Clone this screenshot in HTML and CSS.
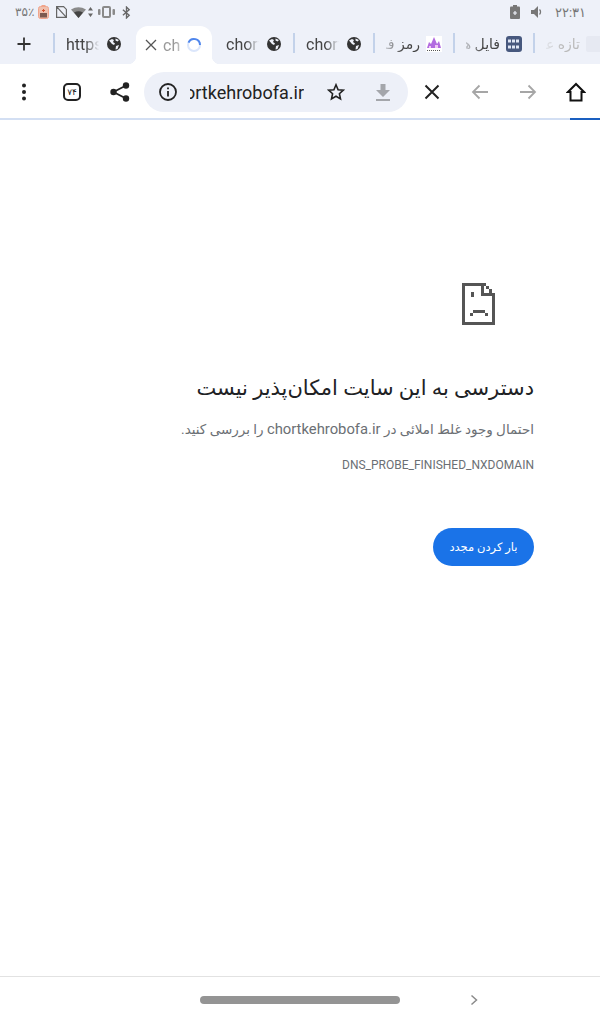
FILE: index.html
```html
<!DOCTYPE html>
<html lang="fa">
<head>
    <meta charset="UTF-8">
    <meta name="viewport" content="width=device-width, initial-scale=1.0">
    <title>chortkehrobofa.ir</title>
    <link rel="stylesheet" href="styles.css">
</head>
<body>
    <!-- Status bar -->
    <div class="status-bar">
        <div class="status-group status-left">
            <span class="status-text">۳۵٪</span>
            <svg width="11" height="14" viewBox="0 0 11 14"><rect x="0.5" y="1.500" width="10" height="12" rx="2" fill="#efc0ae" stroke="#f0a58c"/><rect x="3.500" y="0" width="4" height="2" fill="#f0a58c"/><rect x="2" y="8" width="7" height="4.500" fill="#7d5a50"/><path d="M5.500 4v3M4 5.500h3" stroke="#d2502e"/></svg>
            <svg class="sim-icon" width="11" height="12" viewBox="0 0 11 12" fill="none" stroke="#666" stroke-width="1.200"><path d="M.6.600h7l2.800 2.800v8H.6zM.6.600l9.800 10.800"/></svg>
            <svg width="15" height="11" viewBox="0 0 15 11"><path d="M0 2.500Q7.500-2 15 2.500L7.500 11z" fill="#8a8a8a"/><path d="M3 5.500Q7.500 3 12 5.500L7.500 11z" fill="#444"/></svg>
            <svg class="wifi-arrows" width="5" height="10" viewBox="0 0 5 10" fill="#666"><path d="M2.500 0L5 3.500H0zM2.500 10L0 6.500h5z"/></svg>
            <svg class="vibrate-icon" width="17" height="12" viewBox="0 0 17 12" fill="#8a8a8a"><rect x="4" y="0" width="9" height="12" rx="2"/><rect x="6" y="2" width="5" height="8" fill="#eef1f9"/><rect x="0" y="3" width="2.500" height="6" rx="1"/><rect x="14.500" y="3" width="2.500" height="6" rx="1"/></svg>
            <svg class="bt-icon" width="9" height="13" viewBox="0 0 10 13" fill="none" stroke="#666" stroke-width="1.500"><path d="M1 3.500l7 6-3 3V.5l3 3-7 6"/></svg>
        </div>
        <div class="status-group status-right">
            <svg width="10" height="14" viewBox="0 0 10 14"><rect x="0" y="1.500" width="10" height="12.500" rx="1" fill="#777"/><rect x="3" y="0" width="4" height="2" fill="#777"/><path d="M5 6v4M3 8h4" stroke="#eef1f9" stroke-width="1.200"/></svg>
            <svg width="12" height="12" viewBox="0 0 12 12" fill="none"><path d="M0 4h3l4-4v12L3 8H0z" fill="#777"/><path d="M8.500 3.500a3.500 3.500 0 0 1 0 5" stroke="#777" stroke-width="1.300"/></svg>
            <span class="status-text clock">۲۲:۳۱</span>
        </div>
    </div>

    <!-- Tab strip -->
    <div class="tab-strip">
        <div class="new-tab">
            <svg width="16" height="16" viewBox="0 0 16 16" stroke="#333" stroke-width="1.800"><path d="M8 1.500v13M1.500 8h13"/></svg>
        </div>
        <div class="tab">
            <span class="tab-title">https</span>
            <svg class="globe" viewBox="0 0 14 14"><use href="#globe"/></svg>
        </div>
        <div class="tab tab-active">
            <svg class="tab-close" width="12" height="12" viewBox="0 0 12 12" stroke="#555" stroke-width="1.300"><path d="M1 1l10 10M11 1L1 11"/></svg>
            <span class="tab-title tab-title-short">ch</span>
            <svg class="spinner" width="16" height="16" viewBox="0 0 16 16" fill="none" stroke-width="2"><circle cx="8" cy="8" r="6" stroke="#dbe6fb"/><path d="M2.500 5.600A6 6 0 0 1 14 8" stroke="#4f86ec"/></svg>
        </div>
        <div class="tab">
            <span class="tab-title">chort</span>
            <svg class="globe" viewBox="0 0 14 14"><use href="#globe"/></svg>
        </div>
        <div class="tab">
            <span class="tab-title">chort</span>
            <svg class="globe" viewBox="0 0 14 14"><use href="#globe"/></svg>
        </div>
        <div class="tab tab-rtl">
            <svg class="favicon" width="16" height="16" viewBox="0 0 16 16"><rect width="16" height="16" fill="#fff"/><path d="M1 12l2-6 2 2 3-7 3 7 2-3 2 7z" fill="#b26be0"/><path d="M3 10h2v2H3zM9 9h3v3H9z" fill="#f0c8f5"/><path d="M1 14.500h14" stroke="#555" stroke-dasharray="1 1"/></svg>
            <span class="tab-title" dir="rtl">رمز فراموش</span>
        </div>
        <div class="tab tab-rtl">
            <svg class="favicon" width="16" height="16" viewBox="0 0 16 16"><rect width="16" height="16" rx="3" fill="#47587e"/><path d="M2 5h12M2 11h12" stroke="#dfe6f5" stroke-width="3" stroke-dasharray="3 1"/></svg>
            <span class="tab-title" dir="rtl">فایل های</span>
        </div>
        <div class="tab tab-rtl tab-faded">
            <svg class="favicon" width="16" height="16" viewBox="0 0 16 16"><rect width="16" height="16" rx="2" fill="#e6e9f2"/></svg>
            <span class="tab-title" dir="rtl">تازه عکس</span>
        </div>
    </div>

    <!-- Toolbar -->
    <div class="toolbar">
        <div class="tool-btn">
            <svg width="6" height="18" viewBox="0 0 6 18" fill="#222"><circle cx="3" cy="2.500" r="2"/><circle cx="3" cy="9" r="2"/><circle cx="3" cy="15.500" r="2"/></svg>
        </div>
        <div class="tool-btn">
            <div class="tab-count">۷۴</div>
        </div>
        <div class="tool-btn">
            <svg width="20" height="20" viewBox="0 0 20 20" fill="#222"><circle cx="16" cy="3.500" r="3.200"/><circle cx="3.500" cy="10" r="3.200"/><circle cx="16" cy="16.500" r="3.200"/><path d="M16 3.500L3.500 10 16 16.500" fill="none" stroke="#222" stroke-width="1.800"/></svg>
        </div>
        <div class="omnibox">
            <svg class="info-icon" width="20" height="20" viewBox="0 0 20 20" fill="none" stroke="#222" stroke-width="1.800"><circle cx="10" cy="10" r="8"/><path d="M10 9v5.500M10 5.500v1.800"/></svg>
            <span class="url"><span class="url-inner">chortkehrobofa.ir</span></span>
            <svg class="star-icon" width="18" height="18" viewBox="0 0 18 18" fill="none" stroke="#222" stroke-width="1.600"><path d="M9 1.800l2.100 4.900 5.200.5-3.900 3.500 1.100 5.200L9 13.200l-4.500 2.700 1.100-5.200-3.900-3.500 5.200-.5z"/></svg>
            <svg class="download-icon" width="14" height="17" viewBox="0 0 14 17" fill="#a4a6ab"><path d="M4.500 0h5v6H14l-7 7-7-7h4.500z"/><rect x="0" y="15" width="14" height="2"/></svg>
        </div>
        <div class="tool-btn">
            <svg width="16" height="16" viewBox="0 0 16 16" stroke="#222" stroke-width="2"><path d="M1.500 1.500l13 13M14.500 1.500l-13 13"/></svg>
        </div>
        <div class="tool-btn">
            <svg width="18" height="16" viewBox="0 0 18 16" fill="none" stroke="#a6a6a6" stroke-width="1.800"><path d="M17 8H2M8.500 1.500L2 8l6.500 6.500"/></svg>
        </div>
        <div class="tool-btn">
            <svg width="18" height="16" viewBox="0 0 18 16" fill="none" stroke="#a6a6a6" stroke-width="1.800"><path d="M1 8h15M9.500 1.500L16 8l-6.500 6.500"/></svg>
        </div>
        <div class="tool-btn">
            <svg width="20" height="20" viewBox="0 0 20 20" fill="none" stroke="#111" stroke-width="2"><path d="M10 2L2 10h2.500v8.500h11V10H18z"/></svg>
        </div>
    </div>

    <!-- Progress -->
    <div class="progress"><div class="progress-fill"></div></div>

    <!-- Error page -->
    <div class="page">
        <svg class="error-icon" width="33" height="42" viewBox="0 0 33 42" fill="#555" shape-rendering="crispEdges">
            <path d="M0 0h24v3H3v36h27V13h3v29H0z"/>
            <path d="M19 3h3v7h11v3H19z"/>
            <path d="M24 3h3v3h-3zM27 6h3v4h-3z"/>
            <rect x="9" y="9" width="3" height="5"/>
            <path d="M11 27h12v3h3v3h-3v-3H11v3H8v-3h3z"/>
        </svg>
        <h1 class="error-title">دسترسی به این سایت امکان‌پذیر نیست</h1>
        <p class="error-desc">احتمال وجود غلط املائی در <span class="domain">chortkehrobofa.ir</span> را بررسی کنید.</p>
        <p class="error-code">DNS_PROBE_FINISHED_NXDOMAIN</p>
        <button class="reload-btn">بار کردن مجدد</button>
    </div>

    <!-- Bottom scroll bar -->
    <div class="bottom-bar">
        <div class="scroll-thumb"></div>
        <svg class="chevron" width="8" height="12" viewBox="0 0 8 12" fill="none" stroke="#8a8a8a" stroke-width="1.500"><path d="M1.500 1.500L6.500 6l-5 4.500"/></svg>
    </div>

    <svg class="defs" width="0" height="0">
        <defs>
            <g id="globe">
                <circle cx="7" cy="7" r="7" fill="#333"/>
                <path d="M2 3.500l3-1.500 2 1-1 2 2 1.500-1 1.500-2-1zM9 9l3-1-1.500 4-2 .5zM8.500 1.500l3.500 1.500-1.500 1.500-2-1z" fill="#eef1f9"/>
            </g>
        </defs>
    </svg>
</body>
</html>
```

FILE: styles.css
```css
:root {
    --strip-color: #eef1f9;
    --pill-color: #edf0f8;
    --sep-color: #c3d2ea;
    --accent-color: #1a73e8;
}

* {
    box-sizing: border-box;
}

body {
    margin: 0;
    height: 1024px;
    display: flex;
    flex-direction: column;
    background-color: #fff;
    font-family: Roboto, "Noto Sans", "DejaVu Sans", sans-serif;
    overflow: hidden;
}

/* Status bar */
.status-bar {
    height: 24px;
    display: flex;
    justify-content: space-between;
    align-items: center;
    padding: 0 14px 0 15px;
    background-color: var(--strip-color);
}

.status-group {
    display: flex;
    align-items: center;
}

.status-left {
    gap: 4px;
}

.status-right {
    gap: 11px;
}

.status-text {
    font-size: 12px;
    color: #777;
}

.clock {
    font-size: 13px;
    margin-left: 1px;
}

.sim-icon {
    margin-left: 3px;
}

.wifi-arrows {
    margin-left: -2px;
}

.vibrate-icon {
    margin-left: 1px;
}

.bt-icon {
    margin-left: 3px;
}

/* Tabs */
.tab-strip {
    height: 40px;
    display: flex;
    align-items: stretch;
    background-color: var(--strip-color);
    overflow: hidden;
}

.new-tab {
    width: 54px;
    flex: none;
    display: flex;
    justify-content: center;
    align-items: center;
    padding-right: 6px;
}

.tab {
    width: 80px;
    flex: none;
    position: relative;
    display: flex;
    align-items: center;
    justify-content: space-between;
    padding: 0 13px 0 12px;
}

.tab::before {
    content: "";
    position: absolute;
    left: -1px;
    top: 9px;
    height: 20px;
    width: 2px;
    background-color: var(--sep-color);
}

.tab-active {
    width: 76px;
    margin: 2px 2px 0;
    padding: 0 10px 0 9px;
    background-color: #fff;
    border-radius: 12px 12px 0 0;
    justify-content: flex-start;
}

.tab-active + .tab::before {
    display: none;
}

/* the curved feet of the active tab */
.tab-active::before,
.tab-active::after {
    content: "";
    position: absolute;
    top: auto;
    bottom: 0;
    width: 8px;
    height: 8px;
}

.tab-active::before {
    left: -8px;
    background: radial-gradient(circle at 0 0, transparent 8px, #fff 8.500px);
}

.tab-active::after {
    right: -8px;
    background: radial-gradient(circle at 100% 0, transparent 8px, #fff 8.500px);
}

.tab-title {
    flex: 1;
    font-size: 16px;
    color: #444;
    white-space: nowrap;
    overflow: hidden;
    -webkit-mask-image: linear-gradient(to right, #000 55%, transparent 95%);
    mask-image: linear-gradient(to right, #000 55%, transparent 95%);
}

.tab-title-short {
    margin-left: 6px;
    color: #999;
}

.tab-rtl {
    padding-right: 12px;
}

.tab-rtl .tab-title {
    font-size: 14px;
    text-align: right;
    -webkit-mask-image: linear-gradient(to left, #000 50%, rgba(0, 0, 0, 0.25) 100%);
    mask-image: linear-gradient(to left, #000 50%, rgba(0, 0, 0, 0.25) 100%);
}

.tab-faded .tab-title {
    color: #bbb;
}

.globe {
    width: 14px;
    height: 14px;
    flex: none;
    margin-left: 6px;
}

.spinner {
    flex: none;
}

.tab-close {
    flex: none;
}

.favicon {
    flex: none;
    order: 2;
    margin-left: 6px;
}

.defs {
    position: absolute;
}

/* Toolbar */
.toolbar {
    height: 54px;
    padding-top: 2px;
    display: flex;
    align-items: center;
    background-color: #fff;
}

.tool-btn {
    width: 48px;
    height: 48px;
    flex: none;
    display: flex;
    justify-content: center;
    align-items: center;
}

.tab-count {
    width: 18px;
    height: 18px;
    border: 2px solid #222;
    border-radius: 5px;
    font-size: 9px;
    line-height: 14px;
    text-align: center;
    color: #222;
}

.omnibox {
    width: 264px;
    height: 40px;
    flex: none;
    display: flex;
    align-items: center;
    background-color: var(--pill-color);
    border-radius: 20px;
    padding-left: 14px;
}

.info-icon {
    flex: none;
}

.url {
    width: 114px;
    flex: none;
    margin-left: 12px;
    font-size: 18px;
    color: #222;
    overflow: hidden;
    white-space: nowrap;
    direction: rtl;
}

.url-inner {
    direction: ltr;
    unicode-bidi: embed;
}

.star-icon {
    flex: none;
    margin-left: 23px;
}

.download-icon {
    flex: none;
    margin-left: 31px;
}

.progress {
    height: 2px;
    display: flex;
    justify-content: flex-end;
    background-color: #d3dff3;
}

.progress-fill {
    width: 30px;
    background-color: #1a5fc0;
}

/* Error page */
.page {
    flex: 1;
    display: flex;
    flex-direction: column;
    align-items: flex-end;
    padding: 163px 66px 0 0;
    direction: ltr;
}

.error-icon {
    margin-right: 39px;
}

.error-title {
    direction: rtl;
    margin: 46px 0 0;
    font-size: 21px;
    line-height: 34px;
    font-weight: 400;
    color: #202124;
}

.error-desc {
    direction: rtl;
    margin: 13px 0 0;
    font-size: 13.500px;
    line-height: 22px;
    color: #6b6f74;
}

.domain {
    font-size: 14.800px;
}

.error-code {
    margin: 18px 0 0;
    font-size: 12px;
    line-height: 14px;
    color: #6b6f74;
}

.reload-btn {
    width: 101px;
    height: 38px;
    margin-top: 56px;
    border: none;
    border-radius: 19px;
    background-color: var(--accent-color);
    color: #fff;
    font-family: inherit;
    font-size: 11.500px;
    direction: rtl;
}

/* Bottom bar */
.bottom-bar {
    height: 48px;
    position: relative;
    display: flex;
    justify-content: center;
    align-items: center;
    border-top: 1px solid #e2e2e2;
    padding-bottom: 1px;
}

.scroll-thumb {
    width: 200px;
    height: 8px;
    border-radius: 4px;
    background-color: #949494;
}

.chevron {
    position: absolute;
    left: 470px;
    top: 17px;
}
```
